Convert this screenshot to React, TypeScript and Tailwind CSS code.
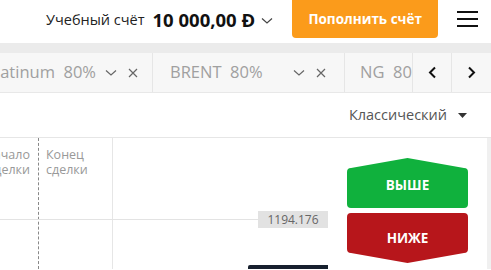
import React from 'react'

const font = { fontFamily: '"Open Sans", "Noto Sans", sans-serif' }

function Chevron({ className = '' }: { className?: string }) {
  return (
    <svg className={className} width="12" height="8" viewBox="0 0 12 8" fill="none">
      <path d="M1 1.5 L6 6 L11 1.5" stroke="currentColor" strokeWidth="1.2" />
    </svg>
  )
}

function Cross() {
  return (
    <svg width="10" height="10" viewBox="0 0 10 10" fill="none">
      <path d="M1 1 L9 9 M9 1 L1 9" stroke="currentColor" strokeWidth="1.2" />
    </svg>
  )
}

export default function App() {
  return (
    <div className="w-[491px] h-[270px] overflow-hidden bg-white" style={font}>
      {/* header */}
      <div className="h-[43px] flex items-start bg-white">
        <div className="flex items-center h-[39px] pl-[46px]">
          <span className="text-[14.5px] text-[#222]">Учебный счёт</span>
          <span className="ml-[8px] text-[18.5px] font-bold text-[#111]">10 000,00 Đ</span>
          <Chevron className="ml-[6px] mt-[2px] text-[#444]" />
        </div>
        <button className="ml-[19px] w-[146px] h-[38px] rounded-b-[4px] bg-[#fb9b1b] text-white text-[13.5px] font-bold">
          Пополнить счёт
        </button>
        <div className="ml-[19px] h-[38px] flex flex-col justify-center gap-[5px]">
          <div className="w-[21px] h-[2px] bg-[#111]" />
          <div className="w-[21px] h-[2px] bg-[#111]" />
          <div className="w-[21px] h-[2px] bg-[#111]" />
        </div>
      </div>
      <div className="h-[10px] bg-[#ebebeb]" />
      {/* tabs */}
      <div className="h-[40px] flex bg-[#f7f7f7] border-b border-[#e8e8e8] overflow-hidden">
        <div className="w-[153px] shrink-0 h-full flex items-center border-r border-[#e6e6e6] relative overflow-hidden">
          <span className="absolute right-[56px] text-[16.5px] text-[#a0a0a0] whitespace-nowrap">Platinum&nbsp;&nbsp;80%</span>
          <div className="absolute left-[105px] flex items-center text-[#666]">
            <Chevron className="mr-[11px]" />
            <Cross />
          </div>
        </div>
        <div className="w-[192px] shrink-0 h-full flex items-center border-r border-[#e6e6e6] pl-[17px] relative">
          <span className="text-[16.5px] text-[#a0a0a0] whitespace-nowrap">BRENT&nbsp;&nbsp;80%</span>
          <div className="absolute left-[140px] flex items-center text-[#666]">
            <Chevron className="mr-[11px]" />
            <Cross />
          </div>
        </div>
        <div className="w-[67px] shrink-0 h-full flex items-center pl-[15px] overflow-hidden">
          <span className="text-[16.5px] text-[#a0a0a0] whitespace-nowrap">NG&nbsp;&nbsp;80%</span>
        </div>
        <div className="w-[40px] shrink-0 h-full flex items-center justify-center border-l border-r border-[#e6e6e6] text-[#111]">
          <svg width="9" height="13" viewBox="0 0 9 13" fill="none">
            <path d="M7 1.5 L2 6.5 L7 11.5" stroke="currentColor" strokeWidth="2" />
          </svg>
        </div>
        <div className="w-[39px] shrink-0 h-full flex items-center justify-center text-[#111]">
          <svg width="9" height="13" viewBox="0 0 9 13" fill="none">
            <path d="M2 1.5 L7 6.5 L2 11.5" stroke="currentColor" strokeWidth="2" />
          </svg>
        </div>
      </div>
      {/* chart type */}
      <div className="h-[45px] flex items-center justify-end pr-[24px] border-b border-[#e6e6e6]">
        <span className="text-[14.5px] text-[#555]">Классический</span>
        <svg className="ml-[11px]" width="9" height="5" viewBox="0 0 9 5">
          <path d="M0 0 L9 0 L4.5 5 Z" fill="#333" />
        </svg>
      </div>
      {/* chart */}
      <div className="relative h-[131px] overflow-hidden">
        <div className="absolute right-0 top-0 bottom-0 w-[4px] bg-[#f0f0f0]" />
        <div className="absolute left-[38px] top-0 bottom-0 border-l border-dashed border-[#888]" />
        <div className="absolute left-[112px] top-0 bottom-0 border-l border-[#e6e6e6]" />
        <div className="absolute left-0 w-[258px] top-[81px] border-t border-[#e3e3e3]" />
        <div className="absolute right-[461px] top-[9px] text-[12.5px] leading-[15px] text-[#999] text-right whitespace-nowrap">
          Начало<br />сделки
        </div>
        <div className="absolute left-[46px] top-[9px] text-[12.5px] leading-[15px] text-[#999]">
          Конец<br />сделки
        </div>
        <div className="absolute left-[258px] top-[73px] w-[70px] h-[17px] bg-[#e2e2e2] flex items-center justify-center text-[12px] text-[#666]">
          1194.176
        </div>
        <div className="absolute left-[248px] top-[127px] w-[80px] h-[10px] bg-[#17202e] rounded-tl-[2px]" />
        {/* call / put */}
        <div className="absolute left-[347px] top-[20px] w-[121px] h-[50px]">
          <svg className="absolute inset-0" width="121" height="50" viewBox="0 0 121 50">
            <path d="M4 10 L60.5 0 L117 10 Q121 10 121 14 L121 46 Q121 50 117 50 L4 50 Q0 50 0 46 L0 14 Q0 10 4 10 Z" fill="#10b13d" />
          </svg>
          <span className="absolute left-0 right-0 top-[17px] text-center text-white text-[13.5px] font-bold">ВЫШЕ</span>
        </div>
        <div className="absolute left-[347px] top-[75px] w-[121px] h-[50px]">
          <svg className="absolute inset-0" width="121" height="50" viewBox="0 0 121 50">
            <path d="M4 0 L117 0 Q121 0 121 4 L121 36 Q121 40 117 40 L60.5 50 L4 40 Q0 40 0 36 L0 4 Q0 0 4 0 Z" fill="#b7161b" />
          </svg>
          <span className="absolute left-0 right-0 top-[15px] text-center text-white text-[13.5px] font-bold">НИЖЕ</span>
        </div>
      </div>
    </div>
  )
}
